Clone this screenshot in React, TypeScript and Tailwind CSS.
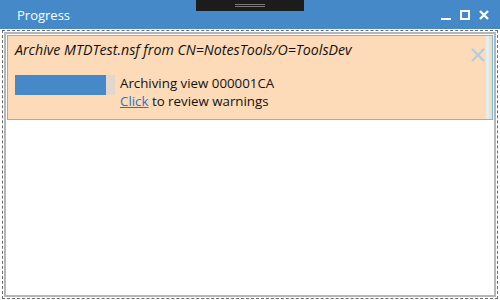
import { X } from 'lucide-react'

const FONT = { fontFamily: '"Open Sans", "Noto Sans", sans-serif' }

function TitleBar() {
  return (
    <div className="relative h-[29px] bg-[#4589c8] flex items-center pl-[17px] pr-[11px]">
      {/* docking handle */}
      <div className="absolute left-[196px] top-0 w-[108px] h-[11px] bg-[#1c1c1c] flex flex-col items-center justify-center gap-[1px]">
        <div className="w-[30px] h-px bg-[#7a7a7a]" />
        <div className="w-[30px] h-px bg-[#7a7a7a]" />
      </div>
      <span className="text-white text-[13px] leading-none mt-[1px]">Progress</span>
      <div className="ml-auto flex items-center gap-[9px] pt-[1px]">
        <div className="w-[10px] h-[10px] flex items-end">
          <div className="w-[10px] h-[2px] bg-white" />
        </div>
        <div className="w-[10px] h-[10px] border-2 border-white" />
        <svg width="10" height="10" viewBox="0 0 10 10" aria-hidden="true">
          <path d="M1 1 L9 9 M9 1 L1 9" stroke="white" strokeWidth="2.4" />
        </svg>
      </div>
    </div>
  )
}

export default function App() {
  return (
    <div className="w-[500px] h-[300px] bg-white flex flex-col overflow-hidden" style={FONT}>
      <TitleBar />
      <div className="flex-1 pl-[2px] pr-[2px] pb-[1px] pt-[1px]">
        <div className="h-full border border-dashed border-[#6b6b6b] p-px">
          <div className="h-full border-2 border-[#b5b5b5] px-[1px] pt-0">
            <div className="relative border border-[#6cbde6] bg-[#fddbb9] pr-[3px] mt-[1px]">
              <div className="border-r-[3px] border-[#dff0f3] pl-[7px] pt-[5px] h-[83px]">
                <div className="italic text-[14.2px] text-[#111] leading-[18px]">
                  Archive MTDTest.nsf from CN=NotesTools/O=ToolsDev
                </div>
                <div className="flex items-start mt-[15px] gap-[5px]">
                  <div className="w-[100px] h-[20px] bg-[#e3d6ca] mt-[1px]">
                    <div className="h-full w-[91%] bg-[#4589c8]" />
                  </div>
                  <div className="text-[13.3px] text-[#111] leading-[18px]">
                    <div>Archiving view 000001CA</div>
                    <div>
                      <span className="text-[#2a73c0] underline">Click</span> to review warnings
                    </div>
                  </div>
                </div>
              </div>
              <X className="absolute right-[3px] top-[8px] w-[22px] h-[22px] text-[#b3cde2]" strokeWidth={2.6} />
            </div>
          </div>
        </div>
      </div>
    </div>
  )
}
